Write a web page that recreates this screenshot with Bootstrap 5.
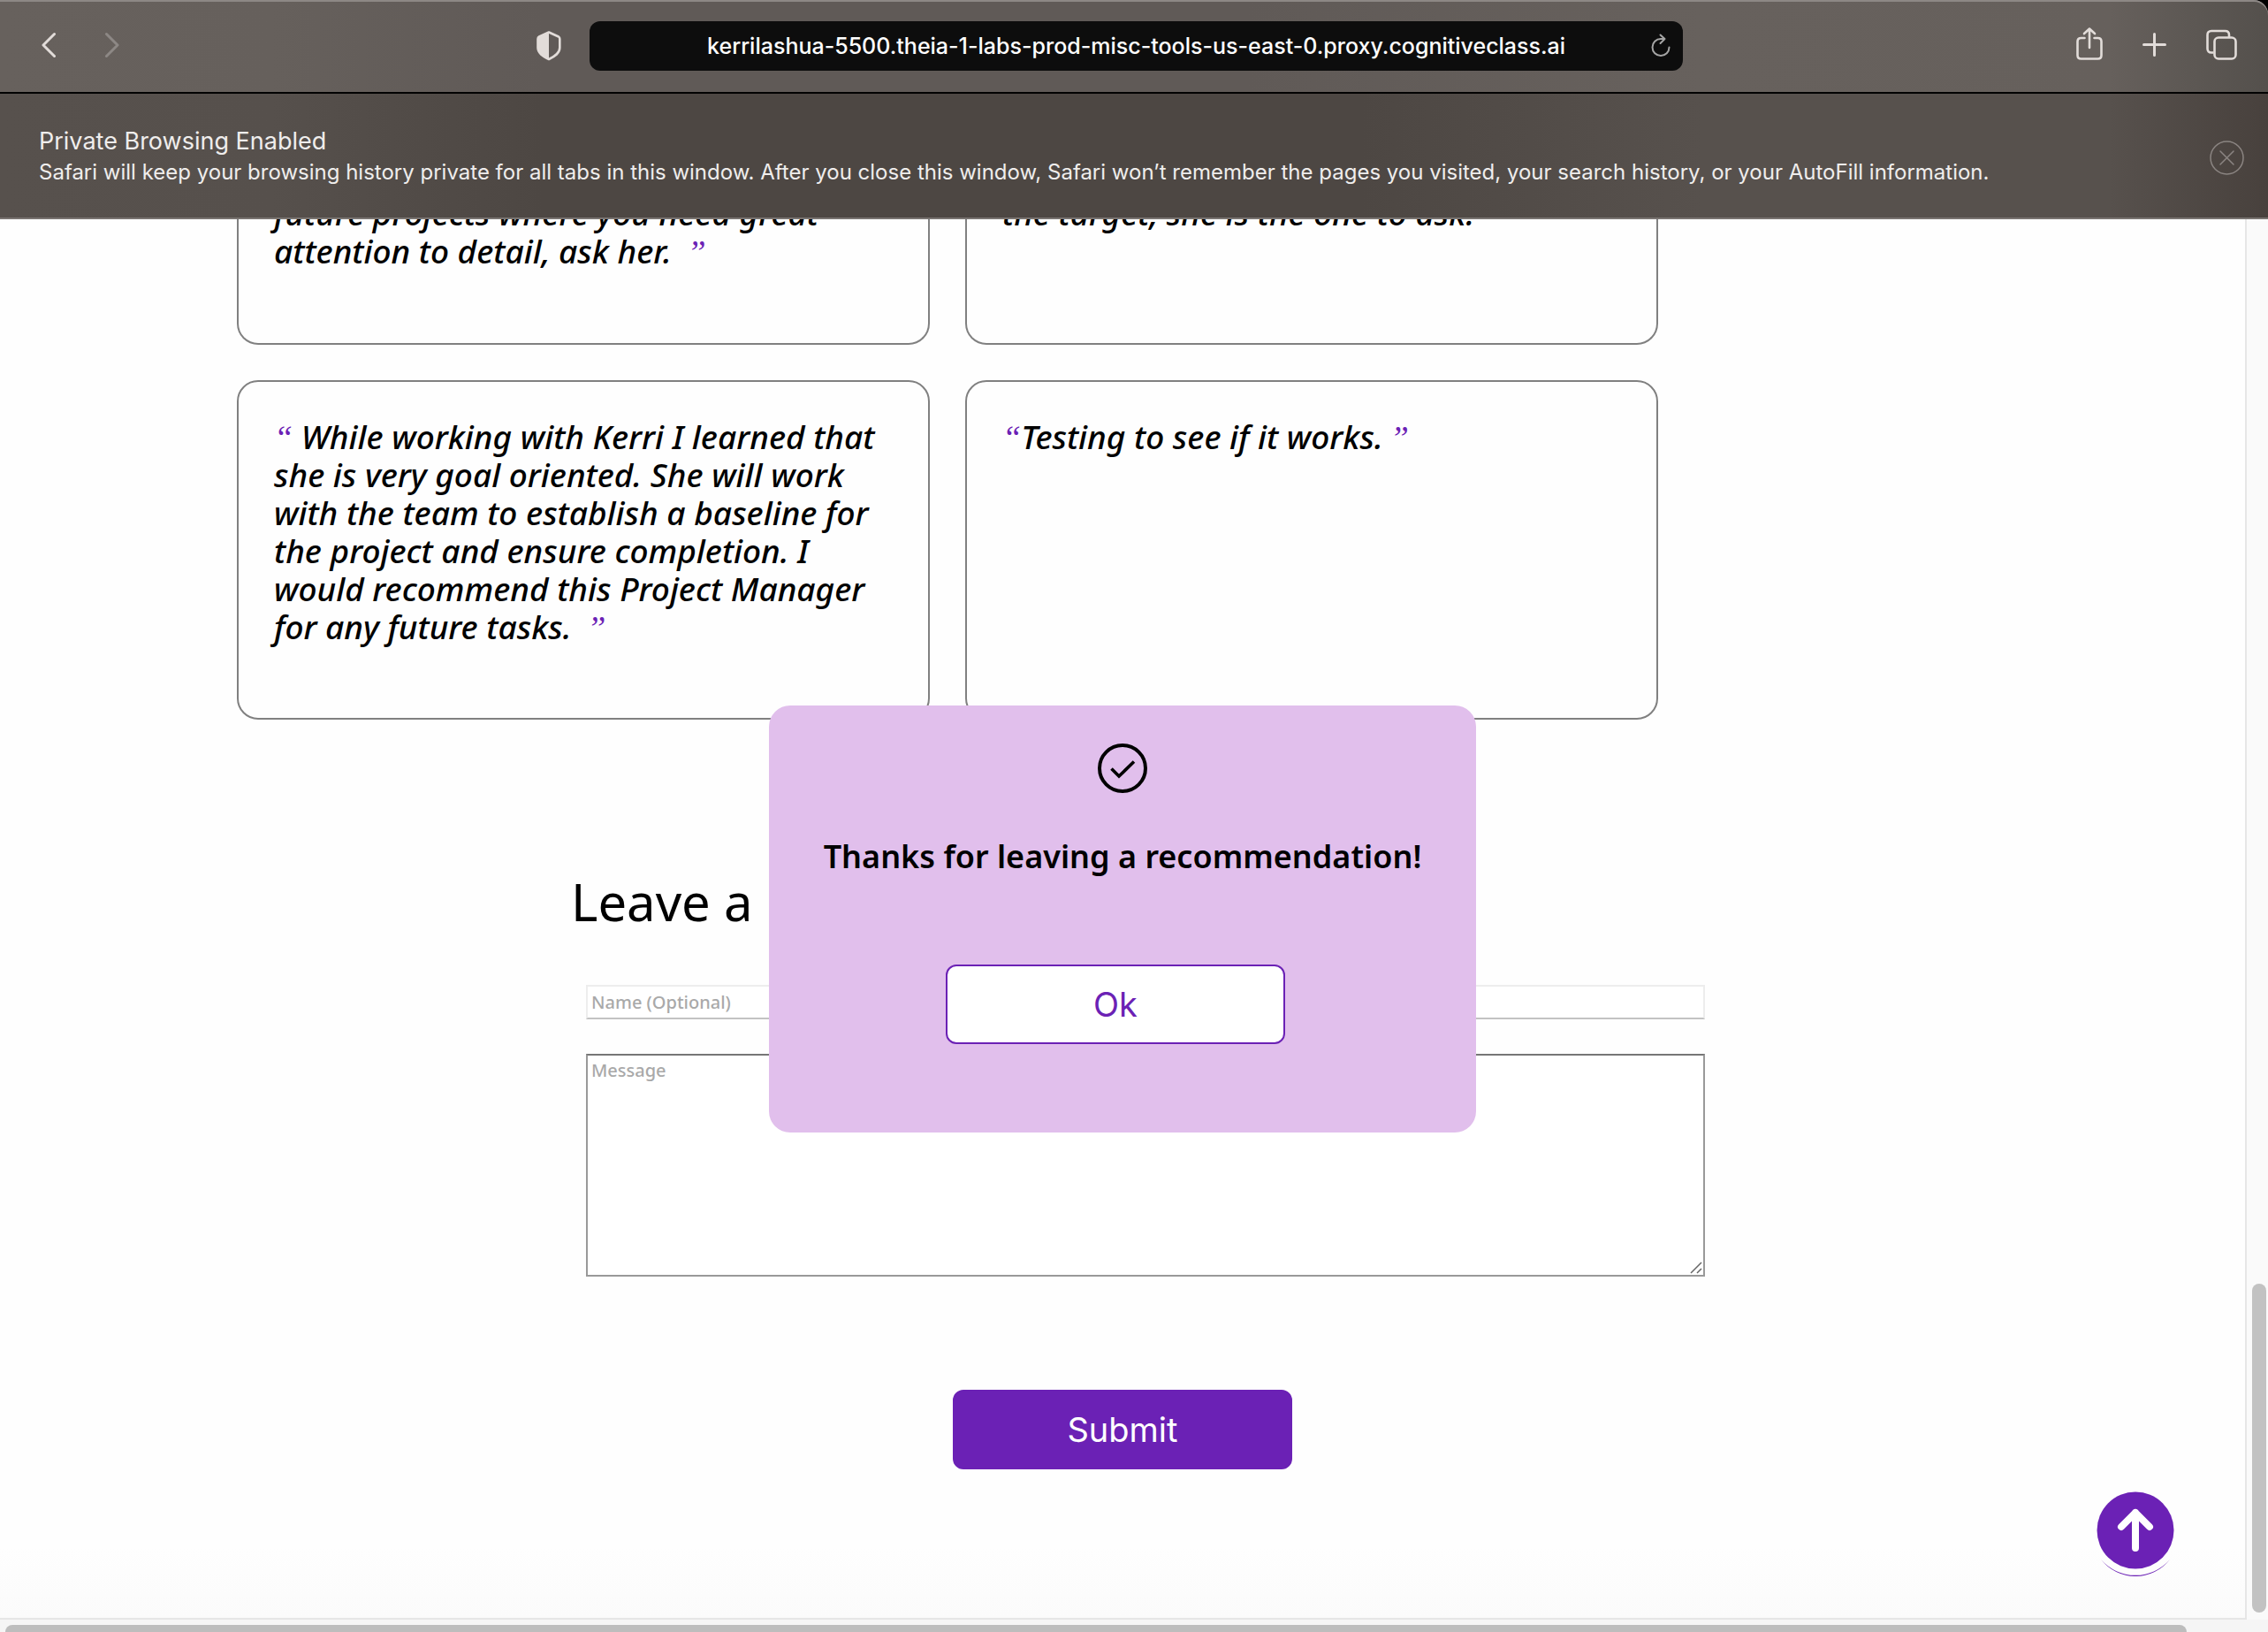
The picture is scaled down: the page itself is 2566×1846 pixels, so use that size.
<!DOCTYPE html>
<html lang="en">
<head>
<meta charset="utf-8">
<meta name="viewport" content="width=device-width, initial-scale=1">
<title>Recommendations</title>
<link href="https://cdn.jsdelivr.net/npm/bootstrap@5.3.0/dist/css/bootstrap.min.css" rel="stylesheet">
<style>
  :root { --purple: #6b21b5; --ui: Inter, "Liberation Sans", sans-serif; --copy: "Noto Sans", "Open Sans", sans-serif; }
  body { font-family: var(--copy); color: #000; background: #f7f7f7; overflow: hidden; }
  svg { display: block; }
  .bare { border: 0; background: none; padding: 0; color: #e2dcd9; }

  /* browser chrome */
  .window-top { background: #000; font-family: var(--ui); }
  .toolbar { height: 104px; border-radius: 0 16px 0 0; box-shadow: inset 0 2px #8d8885;
    background: linear-gradient(90deg, #67615d 0, #66605c 12%, #605a57 24%, #605a57 55%, #67615d 75%, #66605c 93%, #54504c 100%); }
  .side-left { padding: 0 32px 0 47px; width: 26%; }
  .side-right { padding-right: 35px; gap: 45px; flex: 1; }
  .history { gap: 56px; }
  .address { width: 48.2%; height: 56px; border-radius: 12px; background: #0d0d0d; padding: 0 14px 0 36px; }
  .address input { font-size: 25px; line-height: 32px; font-weight: 500; color: #fff; outline: 0; min-width: 0; }
  .notice { margin-top: 2px; min-height: 142px; padding: 4px 27px 0 44px; border-bottom: 2px solid #797471; color: #efedec;
    background: linear-gradient(90deg, #57514d 0, #56504c 12%, #4d4743 24%, #4d4743 60%, #57514d 75%, #57514d 93%, #48413d 100%); }
  .notice-title { font-size: 27px; line-height: 34px; }
  .notice-text { font-size: 24px; line-height: 36px; }

  /* page */
  .page { background: linear-gradient(#fefefe 95%, #fbfbfb 100%); border: solid #e6e6e6; border-width: 0 2px 2px 0; overflow: hidden; }
  .quotes { max-width: 1876px; padding-left: 268px; }
  .quotes .row { --bs-gutter-x: 40px; margin: 0 0 40px; }
  .quotes .col-6:first-child { padding-left: 0; }
  .quotes .col-6:last-child { padding-right: 0; }
  .quote-box { border: 2px solid #808080; border-radius: 24px; padding: 40px; min-height: 384px;
    font-size: 37px; line-height: 43px; font-weight: 500; font-style: italic; }
  .quote-cut { min-height: 142px; height: 142px; padding-top: 0; border-top: 0; border-radius: 0 0 24px 24px; overflow: hidden; }
  .quote-cut p { margin-top: -29px; }
  .qm { font-family: "Liberation Serif", serif; font-weight: 400; font-size: 38px; line-height: 1; color: var(--purple); }
  .qm-end { margin-left: 8px; }
  .leave { max-width: 1318px; margin-top: 132px; }
  .leave h2 { font-size: 58px; line-height: 68px; font-weight: 400; padding-left: 35px; margin-bottom: 60px; }
  .fields { padding-left: 52px; gap: 39px; }
  .entry { font-size: 20px; line-height: 26px; font-weight: 500; border-radius: 0; padding: 4px; background: #fff; resize: none; display: block; width: 100%; }
  .entry::placeholder { color: #a9a9a9; opacity: 1; }
  .entry-name { height: 39px; border: 2px solid #ededed; border-bottom-color: #c3c3c3; }
  .entry-message { height: 252px; border: 2px solid #999; border-top-color: #767676; }
  .grip { right: 3px; bottom: 3px; }
  .big-btn { width: 384px; height: 90px; border-radius: 12px; font-family: var(--ui); font-size: 38px; line-height: 44px; border: 2px solid var(--purple); }
  .btn-send { background: var(--purple); color: #fff; margin-top: 128px; }
  .btn-ok { background: #fff; color: var(--purple); margin: 100px 16px 0 0; }

  .thanks { width: 800px; top: 550px; left: 0; right: 0; margin: 0 auto; padding: 43px 0 100px; border-radius: 24px; background: #e1bfec; }
  .thanks h3 { font-size: 36px; line-height: 44px; font-weight: 650; margin: 50px 0 0; }
  .to-top { right: 80px; bottom: 47px; }

  .track-y { width: 24px; background: #fafafa; padding: 0 2px 8px 6px; }
  .thumb-y { height: 372px; border-radius: 8px; background: #c2c2c2; }
  .track-x { height: 14px; background: #f5f5f5; padding: 6px 0 0 6px; }
  .thumb-x { width: 96.4%; border-radius: 8px 8px 0 0; background: #bdbdbd; }
</style>
<script src="https://cdn.jsdelivr.net/npm/bootstrap@5.3.0/dist/js/bootstrap.bundle.min.js"></script>
</head>
<body class="vh-100 d-flex flex-column">

<header class="window-top flex-shrink-0">
  <nav class="toolbar d-flex align-items-center">
    <div class="side-left d-flex align-items-center justify-content-between">
      <div class="history d-flex">
        <button class="bare" aria-label="Back"><svg width="16" height="44" fill="none" stroke="currentColor" stroke-width="3" stroke-linecap="round" stroke-linejoin="round"><path d="M14.500 8.500 2 21l12.500 12.500"/></svg></button>
        <button class="bare" aria-label="Forward"><svg width="16" height="44" fill="none" stroke="#8d8885" stroke-width="3" stroke-linecap="round" stroke-linejoin="round"><path d="M1.500 8.500 14 21 1.500 33.500"/></svg></button>
      </div>
      <button class="bare" aria-label="Privacy report"><svg width="28" height="44"><path d="M14 6.500 3 11.500Q1.500 12.300 1.500 14V24C1.500 30 7 33.500 14 37 21 33.500 26.300 30 26.300 24V14Q26.300 12.300 25 11.500Z" fill="none" stroke="currentColor" stroke-width="2.600" stroke-linejoin="round"/><path d="M14 6 2 11.500V25C2 31 8 34 14 37.500Z" fill="currentColor"/></svg></button>
    </div>
    <div class="address d-flex align-items-center">
      <input class="bare flex-grow-1 text-center" type="text" aria-label="Address" value="kerrilashua-5500.theia-1-labs-prod-misc-tools-us-east-0.proxy.cognitiveclass.ai">
      <button class="bare" aria-label="Reload"><svg width="22" height="28" fill="none" stroke="#a5a5a5" stroke-width="2" stroke-linecap="round" stroke-linejoin="round"><path d="M20.500 15.500A9.500 9.500 0 1 1 11 6H15.500M10.500 1.500 15.500 6 10.500 11"/></svg></button>
    </div>
    <div class="side-right d-flex align-items-center justify-content-end">
      <button class="bare" aria-label="Share"><svg width="30" height="44" fill="none" stroke="currentColor" stroke-width="2.600" stroke-linecap="round" stroke-linejoin="round"><path d="M9.500 13H5.500Q1.500 13 1.500 17V32.500Q1.500 36.500 5.500 36.500H24.500Q28.500 36.500 28.500 32.500V17Q28.500 13 24.500 13H20.500M15 24V2.500M9 8 15 2.500 21 8"/></svg></button>
      <button class="bare" aria-label="New tab"><svg width="27" height="44" stroke="currentColor" stroke-width="3" stroke-linecap="round"><path d="M1.500 20.500H25.500M13.500 8.500V32.500"/></svg></button>
      <button class="bare" aria-label="Tabs"><svg width="35" height="44" fill="none" stroke="currentColor" stroke-width="2.600"><path d="M8.500 29.500H6Q1.500 29.500 1.500 25V9.500Q1.500 5 6 5H21.500Q26 5 26 9.500V12"/><rect x="9.500" y="12.500" width="24" height="24" rx="4.500"/></svg></button>
    </div>
  </nav>
  <div class="notice d-flex align-items-center justify-content-between">
    <div>
      <div class="notice-title">Private Browsing Enabled</div>
      <div class="notice-text">Safari will keep your browsing history private for all tabs in this window. After you close this window, Safari won’t remember the pages you visited, your search history, or your AutoFill information.</div>
    </div>
    <button class="bare" aria-label="Dismiss"><svg width="39" height="39" fill="none" stroke="#8b8582" stroke-width="1.500" stroke-linecap="round"><circle cx="19.500" cy="19.500" r="18.500"/><path d="M12 12 27 27M27 12 12 27"/></svg></button>
  </div>
</header>

<div class="d-flex flex-grow-1 overflow-hidden">
  <main class="page flex-grow-1 position-relative">
    <section class="quotes">
      <div class="row">
        <div class="col-6"><div class="quote-box quote-cut"><p>future projects where you need great attention to detail, ask her. <span class="qm qm-end">”</span></p></div></div>
        <div class="col-6"><div class="quote-box quote-cut"><p>the target, she is the one to ask.</p></div></div>
      </div>
      <div class="row">
        <div class="col-6"><div class="quote-box"><span class="qm">“</span> While working with Kerri I learned that she is very goal oriented. She will work with the team to establish a baseline for the project and ensure completion. I would recommend this Project Manager for any future tasks. <span class="qm qm-end">”</span></div></div>
        <div class="col-6"><div class="quote-box"><span class="qm">“</span>Testing to see if it works.<span class="qm qm-end">”</span></div></div>
      </div>
    </section>

    <form class="d-flex flex-column align-items-center">
      <div class="leave w-100">
        <h2>Leave a</h2>
        <div class="fields d-flex flex-column">
          <input class="entry entry-name" type="text" aria-label="Name (Optional)" placeholder="Name (Optional)">
          <div class="position-relative">
            <textarea class="entry entry-message" aria-label="Message" placeholder="Message"></textarea>
            <svg class="grip position-absolute" width="14" height="14" stroke="#666" stroke-width="1.500"><path d="M1 13 13 1M8 13 13 8"/></svg>
          </div>
        </div>
      </div>
      <button class="btn big-btn btn-send" type="button">Submit</button>
    </form>

    <div class="thanks position-absolute d-flex flex-column align-items-center" role="dialog" aria-labelledby="thanks-title">
      <svg width="56" height="56" fill="none" stroke="#000"><circle cx="28" cy="28" r="26" stroke-width="4"/><path d="M15.500 28.500 24 37 41 20.500" stroke-width="3.600"/></svg>
      <h3 id="thanks-title">Thanks for leaving a recommendation!</h3>
      <button class="btn big-btn btn-ok" type="button">Ok</button>
    </div>

    <a class="to-top position-absolute" href="#" aria-label="Back to top">
      <svg width="88" height="96"><circle cx="44" cy="44" r="43.500" fill="#6b21b5"/><path d="M44 64V24M28 40 44 24 60 40" fill="none" stroke="#fff" stroke-width="8" stroke-linecap="round" stroke-linejoin="round"/><path d="M5 77A49.500 49.500 0 0 0 83 77 51.600 51.600 0 0 1 5 77Z" fill="#6b21b5"/></svg>
    </a>
  </main>
  <div class="track-y d-flex flex-column justify-content-end flex-shrink-0"><div class="thumb-y"></div></div>
</div>
<div class="track-x d-flex flex-shrink-0"><div class="thumb-x"></div></div>

</body>
</html>
